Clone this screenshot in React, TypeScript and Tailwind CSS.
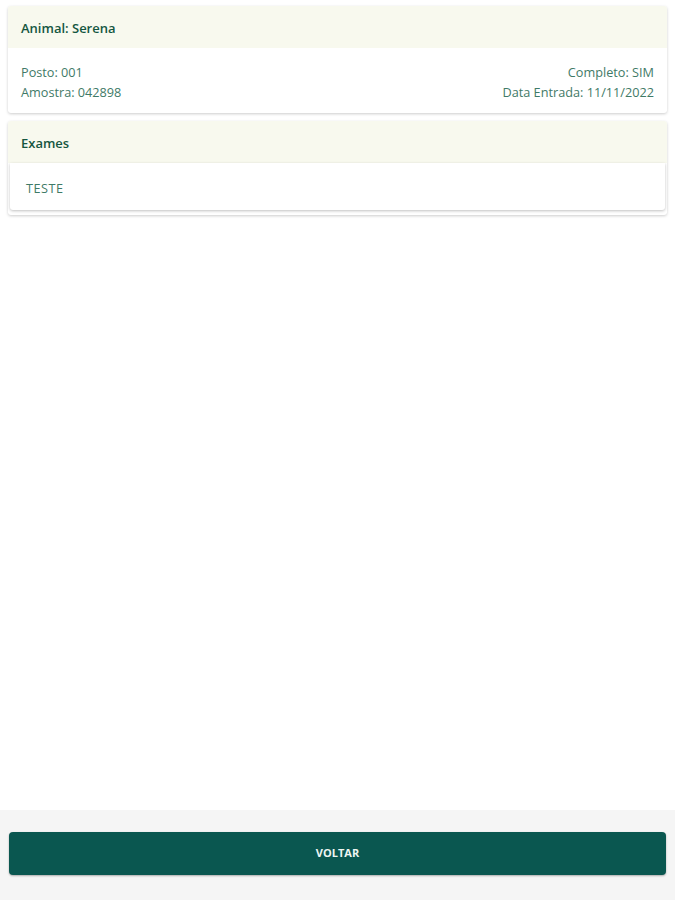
import React from "react"

const font = { fontFamily: "'Open Sans', 'Noto Sans', sans-serif" }

export default function App() {
  return (
    <div className="flex h-[900px] w-[675px] flex-col bg-white" style={font}>
      <div className="flex flex-col gap-2 px-2 pt-[6px]">
        <div className="overflow-hidden rounded-[3px] bg-white shadow-[0_1px_3px_rgba(0,0,0,0.2)]">
          <div className="flex h-[42px] items-center bg-[#f8f9ee] px-[13px] pt-[3px] text-[13px] font-semibold text-[#15563f]">
            Animal: Serena
          </div>
          <div className="flex justify-between px-[13px] pb-[11px] pt-[14px] text-[12.7px] leading-[20px] text-[#3f7a67]">
            <div>
              <div>Posto: 001</div>
              <div>Amostra: 042898</div>
            </div>
            <div className="text-right">
              <div>Completo: SIM</div>
              <div>Data Entrada: 11/11/2022</div>
            </div>
          </div>
        </div>

        <div className="rounded-[3px] bg-white pb-[5px] shadow-[0_1px_3px_rgba(0,0,0,0.2)]">
          <div className="flex h-[42px] items-center rounded-t-[3px] bg-[#f8f9ee] px-[13px] pt-[3px] text-[13px] font-semibold text-[#15563f]">
            Exames
          </div>
          <div className="mx-[2px] flex h-[47px] items-center rounded-b-[3px] bg-white px-4 pt-[5px] text-[12.7px] tracking-[0.5px] text-[#3f7a67] shadow-[0_1px_3px_rgba(0,0,0,0.25)]">
            TESTE
          </div>
        </div>
      </div>

      <div className="flex-1" />

      <div className="h-[90px] bg-[#f5f5f5] px-[9px] pt-[22px]">
        <button className="flex h-[43px] w-full items-center justify-center rounded-[4px] bg-[#0a5750] text-[11px] font-bold text-[#eef5f2] shadow-[0_1px_2px_rgba(0,0,0,0.3)]">
          VOLTAR
        </button>
      </div>
    </div>
  )
}
